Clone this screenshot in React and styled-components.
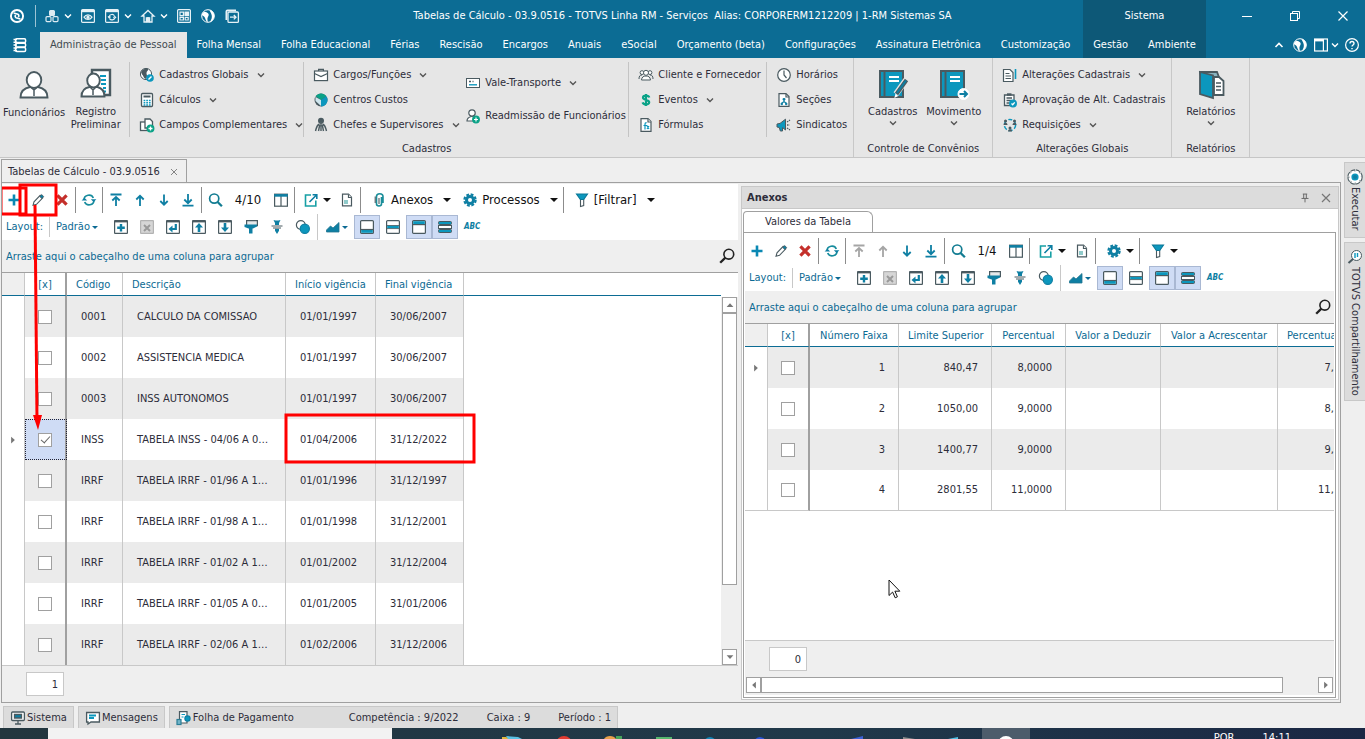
import React, { useState } from "react";
import styled, { createGlobalStyle } from "styled-components";

const INK = "#4a5a60";
const TEAL = "#0c97bd";
const BLUE = "#0e7fa3";
const GREEN = "#0aa287";

const drawings = {
  totvs: (
    <g fill="none" stroke="#fff" strokeWidth="1.7">
      <circle cx="8" cy="8" r="5.4" />
      <path d="M5 5.300l3.800 1.200c1 .5 1 1.500.4 2.300M11 10.700L7.200 9.500c-1-.5-1-1.500-.4-2.300" strokeWidth="1.500" />
    </g>
  ),
  boxes: (
    <g fill="none" stroke="#dcebf2" strokeWidth="1.2">
      <rect x="5.6" y="2.6" width="4.8" height="4.8" rx="1" fill="#dcebf2" />
      <rect x="2" y="8.6" width="5" height="5" rx="1" />
      <rect x="9" y="8.6" width="5" height="5" rx="1" />
    </g>
  ),
  windowEye: (
    <g fill="none" stroke="#e6f1f6" strokeWidth="1.2">
      <rect x="1.6" y="1.6" width="12.8" height="12.8" rx="1" />
      <path d="M2 3h12" strokeWidth="2.4" />
      <path d="M4 9.2c2-3 6-3 8 0-2 3-6 3-8 0z" />
      <circle cx="8" cy="9.2" r="1.1" fill="#e6f1f6" />
    </g>
  ),
  windowSync: (
    <g fill="none" stroke="#e6f1f6" strokeWidth="1.2">
      <rect x="1.6" y="1.6" width="12.8" height="12.8" rx="1" />
      <path d="M2 3h12" strokeWidth="2.4" />
      <path d="M5.2 8.6c.5-2.4 4-2.9 5.2-.8M10.8 9.8c-.5 2.4-4 2.9-5.2.8M4 8.4l1.2 1.4 1.4-1.2M12 10l-1.2-1.4-1.4 1.2" />
    </g>
  ),
  home: (
    <g fill="none" stroke="#e6f1f6" strokeWidth="1.3">
      <path d="M2 8l6-5.5L14 8h-2v6H9.6v-4H6.4v4H4V8z" />
      <path d="M7.4 10h1.4v4H7.4z" fill="#e6f1f6" />
    </g>
  ),
  panes: (
    <g fill="none" stroke="#e6f1f6" strokeWidth="1.2">
      <rect x="1.6" y="1.6" width="12.8" height="12.8" rx="1" />
      <path d="M4 4.2h3.4v3.4H4zM4 9.4h3.4V12H4zM9.2 9.4h3V12h-3z" />
      <path d="M9 4h3.5v3.5H9z" fill="#e6f1f6" />
    </g>
  ),
  globeWhite: (
    <g>
      <circle cx="8" cy="8" r="6.3" fill="none" stroke="#fff" strokeWidth="1" />
      <path d="M1.800 6.500C2.800 4 4.600 3 6.500 4.200c1.800 1 2.700 1.800 2 3.600-.7 1.600-1.300 2.400-1 4.200l.3 2.300C6 13.500 5.500 11 4.800 9.500 4 8 2.500 8 1.800 6.500z" fill="#fff" />
      <path d="M9.500 1.800c3.500.8 5.300 4 4.700 7.200-.5 2.500-2.200 4.500-4.700 5.200 2-2.200 2.700-4.800 2.200-7-.4-1.900-1.700-3.200-2.200-5.400z" fill="#fff" />
    </g>
  ),
  exit: (
    <g fill="none" stroke="#e6f1f6" strokeWidth="1.3">
      <rect x="4" y="4" width="10.400" height="10.400" rx="1" />
      <path d="M2.400 12V3.500c0-.8.400-1.100 1.100-1.100H12" strokeWidth="1.800" />
      <path d="M6 9.200h6M9.800 7l2.200 2.200-2.200 2.200" />
    </g>
  ),
  server: (
    <g fill="none" stroke="#fff" strokeWidth="1.5">
      <rect x="3.600" y="1.800" width="10" height="3.800" rx="1.200" />
      <rect x="3.600" y="6.200" width="10" height="3.800" rx="1.200" />
      <rect x="3.600" y="10.600" width="10" height="3.800" rx="1.200" />
      <path d="M1.500 2.500h3.500M1.500 5.200h3.500M1.500 8h3.500M1.500 11h3.500M1.500 13.600h3.500" />
    </g>
  ),
  minimize: <path d="M3 8.500h10" stroke="#fff" fill="none" />,
  restore: (
    <g fill="none" stroke="#fff">
      <rect x="3.500" y="5.500" width="7" height="7" />
      <path d="M5.500 5.500v-2h7v7h-2" />
    </g>
  ),
  close: <path d="M3.500 3.500l9 9M12.500 3.500l-9 9" stroke="#fff" strokeWidth="1.200" fill="none" />,
  closeGray: <path d="M4 4l8 8M12 4l-8 8" stroke="#777" strokeWidth="1.200" fill="none" />,
  chevronUp: <path d="M4.500 10L8 6.500 11.500 10" stroke="#fff" strokeWidth="1.600" fill="none" />,
  layoutWhite: (
    <g fill="none" stroke="#fff" strokeWidth="1.200">
      <rect x="1.600" y="2" width="12.800" height="12" />
      <path d="M1.600 3.200h8.400" strokeWidth="2.400" />
      <path d="M10.400 2v12" />
    </g>
  ),
  help: (
    <g fill="none" stroke="#fff" strokeWidth="1.200">
      <circle cx="8" cy="8" r="6.400" />
      <path d="M6 6.500c0-2.600 4-2.600 4 0C10 8 8 8 8 9.600M8 11v1.200" strokeWidth="1.400" />
    </g>
  ),
  globe: (
    <g>
      <circle cx="7" cy="7" r="5.600" fill="#fff" stroke={INK} />
      <path d="M2 5c1-3 5-4 7-3 .5 2-1.500 2-1.500 4S9 9 7 12C4 11 5 9 3 7.500z" fill={INK} />
      <circle cx="11" cy="11" r="3.800" fill={TEAL} />
      <path d="M9.500 12.500l3-3" stroke="#fff" strokeWidth="1.400" />
    </g>
  ),
  calc: (
    <g>
      <rect x="2.500" y="1.500" width="11" height="13" rx="1" fill="#fff" stroke={INK} strokeWidth="1.300" />
      <path d="M4.500 3.500h7v2h-7z" fill={INK} />
      <path d="M4.600 8.500h7M4.600 10.700h7M4.600 12.900h7" stroke={TEAL} strokeWidth="1.500" strokeDasharray="1.700 .95" />
    </g>
  ),
  fields: (
    <g fill="#fff" stroke={INK} strokeWidth="1.300">
      <rect x="1.500" y="5" width="7" height="8.500" />
      <path d="M6 2h5l2.500 2.500V11H6z" />
      <circle cx="11.500" cy="11.500" r="3.300" fill={GREEN} stroke={GREEN} />
      <path d="M11.500 9.500v4M9.500 11.500h4" stroke="#fff" />
    </g>
  ),
  briefcase: (
    <g fill="#fff" stroke={INK} strokeWidth="1.200">
      <path d="M5.600 4V2.400h4.800V4" fill="none" />
      <rect x="1.500" y="4" width="13" height="9.600" />
      <path d="M1.500 6.500l6.500 3 6.500-3" fill="none" />
    </g>
  ),
  pie: (
    <g>
      <circle cx="8" cy="8" r="6.500" fill={INK} />
      <path d="M8 8L2.800 4.300A6.300 6.300 0 0 1 13.200 4.300z" fill={GREEN} />
      <path d="M8 8l5.200-3.700A6.300 6.300 0 0 1 8 14.400z" fill={TEAL} />
      <path d="M8 8L2.500 5v4L8 14z" fill="#cfe6ee" />
    </g>
  ),
  boss: (
    <g fill="none" stroke={INK} strokeWidth="1.400">
      <circle cx="8" cy="3.800" r="2.300" fill={INK} />
      <path d="M8 6v8M6.500 7C3.500 8 3.500 11 2.500 14M9.500 7c3 1 3 4 4 7M6.700 8l-1.200 6M9.300 8l1.200 6" />
    </g>
  ),
  card: (
    <g>
      <rect x="1.500" y="3.500" width="13" height="9" fill="#fff" stroke={INK} />
      <path d="M4 6.500h2M7.500 6.500h1" stroke={INK} strokeWidth="1.400" />
      <path d="M4 9.800h8" stroke={TEAL} strokeWidth="1.400" />
    </g>
  ),
  readmit: (
    <g fill="#fff" stroke={INK} strokeWidth="1.200">
      <path d="M2 13c0-3 2-4 4.500-4.500h1L11 10v3z" />
      <circle cx="7" cy="5" r="3.200" />
      <circle cx="11" cy="11.500" r="3.300" fill={GREEN} stroke={GREEN} />
      <path d="M11 9.500v4M9 11.500h4" stroke="#fff" />
    </g>
  ),
  people: (
    <g fill="#fff" stroke={INK}>
      <circle cx="4" cy="5.600" r="1.900" />
      <circle cx="12" cy="5.600" r="1.900" />
      <path d="M1 12c0-3 1-4 3-4M15 12c0-3-1-4-3-4" fill="none" />
      <path d="M3.500 13c.3-3 2-4 4.500-4s4.200 1 4.500 4z" />
      <circle cx="8" cy="5.800" r="2.500" />
    </g>
  ),
  dollar: (
    <path d="M8 2v12M11.300 5.500C10.500 3 5 3 5 5.700c0 2.600 6.200 1.800 6.200 4.600 0 2.800-5.700 2.700-6.600 0" stroke={GREEN} strokeWidth="2.200" fill="none" />
  ),
  formula: (
    <g fill="#fff" stroke={INK} strokeWidth="1.200">
      <path d="M3 1.600h7l3 3v9.800H3z" />
      <path d="M10 2v3h3" />
      <path d="M5.500 8.500h4M7 12.500V7c0-1 .6-1.300 1.600-1.300M9 9l2 3M11 9l-2 3" stroke={TEAL} fill="none" />
    </g>
  ),
  clock: (
    <g fill="#fff" stroke={INK} strokeWidth="1.200">
      <circle cx="8" cy="8" r="6.300" />
      <path d="M8 3.500V8l2.500 3" fill="none" />
    </g>
  ),
  sections: (
    <g fill="#fff" stroke={INK} strokeWidth="1.200">
      <path d="M3 1.600h7l3 3v9.800H3z" />
      <path d="M10 2v3h3" fill="none" />
      <path d="M8 7.500v2M5.500 11.500l2.500-2 2.500 2" stroke={BLUE} fill="none" />
      <path d="M7 6.500h2v1.500H7zM5 11.200h1.500v1.500H5zM9.500 11.200H11v1.500H9.500z" fill={BLUE} stroke={BLUE} strokeWidth=".8" />
    </g>
  ),
  horn: (
    <g>
      <path d="M1 7l3-.6 5.500-4.200V13L6.500 10.500V14H4.300l-1-3.500L1 10z" fill={TEAL} stroke={INK} />
      <path d="M11 8h2.500M11 5l3-2M11 11l3 2" stroke={INK} strokeWidth="1.300" strokeDasharray="1.500 .8" />
    </g>
  ),
  docEdit: (
    <g fill="#fff" stroke={INK} strokeWidth="1.200">
      <path d="M1.500 2.500H8l3 3v9H1.500z" />
      <path d="M3.500 6.500h4M3.500 9h5.500M3.500 11.500h5.500" />
      <path d="M13.500 2v10" stroke={TEAL} strokeWidth="1.600" />
    </g>
  ),
  approve: (
    <g fill="#fff" stroke={INK} strokeWidth="1.300">
      <path d="M2.500 3h9.500v10.500H2.500z" />
      <path d="M5 2.500h4.500" strokeWidth="2.400" />
      <path d="M4.500 6h5.500M4.500 8.500h5M4.500 11h3" />
      <circle cx="11" cy="11.500" r="3.300" fill={TEAL} stroke={TEAL} />
      <path d="M9.500 11.500l1.200 1.200 2-2.400" stroke="#fff" fill="none" />
    </g>
  ),
  requests: (
    <g>
      <circle cx="8" cy="8" r="5.600" fill="none" stroke={TEAL} strokeWidth="1.500" strokeDasharray="4 2" />
      <g fill={INK}>
        <circle cx="3.500" cy="4" r="1.500" />
        <path d="M1.500 8c0-3 4-3 4 0zM10.500 8c0-3 4-3 4 0zM6 14.500c0-3 4-3 4 0z" />
        <circle cx="12.500" cy="4" r="1.500" />
        <circle cx="8" cy="11" r="1.500" />
      </g>
    </g>
  ),
  person: (
    <g fill="#fff" stroke={INK} strokeWidth="1.900">
      <path d="M2.500 28.500c0-7 4-9.500 9.500-10.500h8c5.500 1 9.500 3.500 9.500 10.500z" />
      <path d="M12 17.500l4 3.500 4-3.500M16 21v6" fill="none" strokeWidth="1.500" />
      <ellipse cx="16" cy="11" rx="7.300" ry="8" />
    </g>
  ),
  personDoc: (
    <g fill="#fff" stroke={INK} strokeWidth="1.900">
      <path d="M12 2h18v25H12z" strokeWidth="2.400" />
      <path d="M20 8h6M21 12h5M21 16h5M23 20h3M23 23.500h3" stroke={TEAL} />
      <path d="M1.500 28.500c0-6 3-8.500 8-9.500h8c4 1 7 3.500 7 9.500z" />
      <path d="M10 19l3 3 3-3M13 22v5" fill="none" strokeWidth="1.500" />
      <ellipse cx="13.500" cy="12.500" rx="6.300" ry="7" />
    </g>
  ),
  bookPen: (
    <g stroke={INK} strokeWidth="2">
      <rect x="3" y="3" width="23" height="26" fill={TEAL} />
      <path d="M7.500 3v26" />
      <path d="M12 9h10M12 13h10" stroke="#fff" />
      <path d="M29 12L19 26" fill="none" stroke="#e6e6e6" strokeWidth="6" />
      <path d="M29.500 12L19.500 26" fill="none" strokeWidth="4" />
      <path d="M29 12.500L20 25" stroke={BLUE} />
      <path d="M18.600 25.500l-1.300 4.500 4-2z" fill="#fff" stroke="none" />
    </g>
  ),
  bookArrow: (
    <g stroke={INK} strokeWidth="2">
      <rect x="3" y="3" width="23" height="26" fill={TEAL} />
      <path d="M7.500 3v26" />
      <path d="M12 9h10M12 13h10" stroke="#fff" />
      <circle cx="25.500" cy="26" r="5.500" fill="#fff" stroke="#fff" strokeWidth="1" />
      <path d="M21.500 26h7M26 23l3 3-3 3" stroke={BLUE} fill="none" />
    </g>
  ),
  reportBook: (
    <g stroke={INK} strokeWidth="1.800">
      <path d="M5 4h17l1.500 4v18H10z" fill="#8ab4c0" />
      <path d="M19 9h5l4.500 4v14H19z" fill="#fff" />
      <path d="M21 15h5M21 18.500h5M21 22h5" strokeWidth="1.300" />
      <path d="M5 4l13 3.500V30L5 26z" fill={TEAL} />
    </g>
  ),
  plus: <path d="M8 2.500v11M2.500 8h11" stroke="#0a88b3" strokeWidth="2.600" fill="none" />,
  pencil: (
    <g>
      <path d="M3 13.300l1-3.500 6.200-6.500 2.600 2.500-6.300 6.500z" fill="#fff" stroke={INK} strokeWidth="1.100" />
      <path d="M9.700 4.500l2-1.900 2 1.900-1.900 2z" fill={BLUE} stroke={INK} strokeWidth=".8" />
    </g>
  ),
  remove: <path d="M3.400 3.400l9.200 9.200M12.600 3.400l-9.200 9.200" stroke="#c4302b" strokeWidth="3.200" fill="none" />,
  refresh: (
    <g fill="none" stroke={BLUE} strokeWidth="1.700">
      <path d="M3 8c0-5.500 7.500-6.500 9.300-2M13 8c0 5.500-7.500 6.500-9.300 2" stroke="#178c9d" />
      <path d="M9.800 7.200h5.600L12.600 10zM.6 8.600h5.600L3.400 5.800z" fill={BLUE} stroke="none" />
    </g>
  ),
  first: <path d="M2.500 2.500h11M8 14V5M4.300 8.500L8 5l3.700 3.500" stroke="currentColor" strokeWidth="1.800" fill="none" />,
  up: <path d="M8 14V3.500M4.300 7.500L8 3.800l3.700 3.700" stroke="currentColor" strokeWidth="1.800" fill="none" />,
  down: <path d="M8 2.500V13M4.300 9L8 12.700 11.700 9" stroke="currentColor" strokeWidth="1.800" fill="none" />,
  last: <path d="M2.500 13.700h11M8 2v9.500M4.300 7.500L8 11.200l3.700-3.700" stroke="currentColor" strokeWidth="1.800" fill="none" />,
  search: (
    <g fill="none" stroke="#127c92">
      <circle cx="7.200" cy="6.600" r="4.600" strokeWidth="1.700" />
      <path d="M10.600 10l4.300 4.300" strokeWidth="2.300" />
    </g>
  ),
  columns: (
    <g fill="#fff" stroke={INK} strokeWidth="1.200">
      <rect x="1.600" y="2.200" width="12.800" height="12" />
      <path d="M8 2v12" />
      <path d="M1.200 3.400h13.600" stroke={BLUE} strokeWidth="2.600" />
    </g>
  ),
  exportBox: (
    <g fill="none" stroke="#17a0a5" strokeWidth="1.600">
      <path d="M8 3H2.500v11h10.300V8.500" />
      <path d="M6.500 10l6.500-6.500M9.600 2.800h4.200V7" stroke={BLUE} />
    </g>
  ),
  docGreen: (
    <g fill="#fff" stroke={INK} strokeWidth="1.200">
      <path d="M3.500 2.200h6l3 3v8.600h-9z" />
      <path d="M9.500 2.500v3h3" />
      <path d="M5 8h4v4H5z" fill="#8fcaca" stroke="none" />
    </g>
  ),
  clip: (
    <g fill="none" stroke="#1a8d99" strokeWidth="1.600">
      <path d="M10.500 5v7c0 2.600-5 2.600-5 0V4.500C5.500.8 12 .8 12 4.500V11" />
      <path d="M8 6v6M4.200 4.500V11" strokeWidth="1.100" stroke={INK} />
    </g>
  ),
  gear: (
    <g>
      <circle cx="8" cy="8" r="5" fill={BLUE} />
      <circle cx="8" cy="8" r="5.600" fill="none" stroke={BLUE} strokeWidth="2.200" strokeDasharray="2.800 1.600" />
      <circle cx="8" cy="8" r="2" fill="#fff" />
    </g>
  ),
  funnel: (
    <g stroke={INK} strokeWidth="1.100">
      <path d="M6.500 7.500h3.200v6l-3.200 1z" fill="#fff" />
      <path d="M2.500 2h11L9.700 7.500H6.400z" fill={TEAL} stroke="#0b7898" />
    </g>
  ),
  lens: (
    <g fill="none" stroke="#222">
      <circle cx="9.800" cy="6.200" r="4.900" strokeWidth="1.600" />
      <path d="M6.400 9.600L1.200 14.800" strokeWidth="2.300" />
    </g>
  ),
  addBox: (
    <g fill="#fff" stroke={INK} strokeWidth="1.200">
      <rect x="1.600" y="1.600" width="12.800" height="12.800" rx=".5" />
      <path d="M1.500 2.500h13" strokeWidth="1.800" />
      <path d="M8 5v7.500M4.200 8.700h7.600" stroke={BLUE} strokeWidth="2.400" />
    </g>
  ),
  delBox: (
    <g fill="#d6d6d6" stroke="#b3b3b3" strokeWidth="1.200">
      <rect x="1.600" y="1.600" width="12.800" height="12.800" rx=".5" />
      <path d="M5 6l6 6M11 6l-6 6" stroke="#999" strokeWidth="2" />
    </g>
  ),
  backBox: (
    <g fill="#fff" stroke={INK} strokeWidth="1.200">
      <rect x="1.600" y="1.600" width="12.800" height="12.800" rx=".5" />
      <path d="M1.500 2.500h13" strokeWidth="1.800" />
      <path d="M10.800 5v5H6" stroke={BLUE} strokeWidth="2.200" fill="none" />
      <path d="M7.500 6.500v7L3.500 10z" fill={BLUE} stroke="none" />
    </g>
  ),
  upBox: (
    <g fill="#fff" stroke={INK} strokeWidth="1.200">
      <rect x="1.600" y="1.600" width="12.800" height="12.800" rx=".5" />
      <path d="M1.500 2.500h13" strokeWidth="1.800" />
      <path d="M8 13V7" stroke={BLUE} strokeWidth="2.600" />
      <path d="M8 4l4 4.500H4z" fill={BLUE} stroke="none" />
    </g>
  ),
  downBox: (
    <g fill="#fff" stroke={INK} strokeWidth="1.200">
      <rect x="1.600" y="1.600" width="12.800" height="12.800" rx=".5" />
      <path d="M1.500 2.500h13" strokeWidth="1.800" />
      <path d="M8 4v5" stroke={BLUE} strokeWidth="2.600" />
      <path d="M8 13L4 8.500h8z" fill={BLUE} stroke="none" />
    </g>
  ),
  brush: (
    <g>
      <path d="M3.600 1.600h10.800v5H3.600z" fill="#e6e9ea" stroke={INK} strokeWidth="1.200" />
      <path d="M1.500 5.500h12.500v2L10 9.500H5.500L1.500 8z" fill={BLUE} />
      <path d="M6 9h3.500v5.500H6z" fill={BLUE} />
    </g>
  ),
  pin: (
    <g>
      <path d="M4.500 1l2 .6h3l2-.6-1.500 3v2H6V4zM6 9.800h4v2L8 15l-2-3.200z" fill={BLUE} />
      <path d="M2.500 7h11M4 9h8" stroke={INK} strokeWidth="1.100" />
    </g>
  ),
  circles: (
    <g strokeWidth="1.200">
      <circle cx="5.800" cy="6" r="4.400" fill="#fff" stroke={INK} />
      <circle cx="9.800" cy="9.800" r="4.600" fill={TEAL} stroke={BLUE} />
    </g>
  ),
  chart: <path d="M1.500 13V11l4-4 2.500 2 6-5.500V13z" fill={BLUE} stroke="#22758f" strokeWidth=".8" />,
  rowBottom: (
    <g fill="#fff" stroke={INK} strokeWidth="1.200">
      <rect x="1.600" y="1.600" width="12.800" height="12.800" rx="1" />
      <path d="M2.200 10.800h11.600v3H2.200z" fill={TEAL} stroke="none" />
      <path d="M2 10.500h12" />
    </g>
  ),
  rowMiddle: (
    <g fill="#fff" stroke={INK} strokeWidth="1.200">
      <rect x="1.600" y="1.600" width="12.800" height="12.800" rx="1" />
      <path d="M2.200 6.500h11.600v3H2.200z" fill={TEAL} stroke="none" />
      <path d="M2 6.500h12M2 9.600h12" strokeWidth=".8" />
    </g>
  ),
  rowTop: (
    <g fill="#fff" stroke={INK} strokeWidth="1.200">
      <rect x="1.600" y="1.600" width="12.800" height="12.800" rx="1" />
      <path d="M2.200 2.200h11.600v3.200H2.200z" fill={TEAL} stroke="none" />
      <path d="M2 5.600h12" />
    </g>
  ),
  rowBands: (
    <g fill={TEAL} stroke={INK}>
      <rect x="1.500" y="2.500" width="13" height="3" rx="1" />
      <rect x="1.500" y="6.500" width="13" height="3" fill="#fff" />
      <rect x="1.500" y="10.500" width="13" height="3" rx="1" />
    </g>
  ),
  pushpin: <path d="M5.500 3.500h5M6.500 3.500v5M9.500 3.500v5M4 8.500h8M8 8.500v4.500" stroke="#666" strokeWidth="1.100" fill="none" />,
  caretUp: <path d="M3.500 10.500h9L8 5.500z" fill="#777" />,
  caretDown: <path d="M3.500 5.500h9L8 10.500z" fill="#777" />,
  caretLeft: <path d="M10.500 3.500v9L5.500 8z" fill="#777" />,
  caretRight: <path d="M5.500 3.500v9L10.500 8z" fill="#777" />,
  gearWhite: (
    <g>
      <circle cx="8" cy="8" r="5.700" fill="#fff" stroke={INK} strokeWidth="4" strokeDasharray="3.800 .68" />
      <circle cx="8" cy="8" r="5.500" fill="#fff" stroke="#fff" strokeWidth="2.200" strokeDasharray="3.300 1.020" />
      <circle cx="8" cy="8" r="2.800" fill={BLUE} stroke={TEAL} strokeWidth="1.600" />
    </g>
  ),
  shareLens: (
    <g fill="#fff" stroke={INK}>
      <path d="M6 10L1.500 14" strokeWidth="2" />
      <circle cx="9.500" cy="6.500" r="5" />
      <path d="M8 4v5M10.500 4v4" stroke={TEAL} strokeWidth="1.400" />
    </g>
  ),
  monitor: (
    <g fill="#fff" stroke={INK} strokeWidth="1.300">
      <rect x="1.600" y="2" width="12.800" height="8.500" rx="1" />
      <path d="M4.500 4.500h7v3.500h-7z" fill={BLUE} />
      <path d="M8 11v2.500M5 14h6" />
    </g>
  ),
  message: (
    <g fill="#fff" stroke={INK} strokeWidth="1.300">
      <path d="M1.600 2.500h12.800v9.500H6L3 14v-2H1.600z" />
      <path d="M4 5.500h7M4 8h5" stroke={TEAL} strokeWidth="1.800" />
    </g>
  ),
  payroll: (
    <g fill="#fff" stroke={INK} strokeWidth="1.200">
      <path d="M3.500 1.600H11V13H3.500z" />
      <path d="M5.500 4.500h3.500M5.500 7h2" stroke={TEAL} />
      <circle cx="11.500" cy="8.500" r="2.600" fill={TEAL} stroke={BLUE} />
      <rect x="1" y="9.500" width="4" height="5" fill="#72b4c8" stroke="#2b7e97" />
    </g>
  ),
};

const Icon = ({ name, size = 16 }) => (
  <Glyph
    width={size}
    height={size}
    viewBox={size > 20 ? "0 0 32 32" : "0 0 16 16"}
    aria-hidden="true"
  >
    {drawings[name]}
  </Glyph>
);

const Chevron = () => (
  <Glyph width="8" height="8" viewBox="0 0 8 8" aria-hidden="true">
    <path d="M1 2.500l3 3 3-3" stroke="currentColor" strokeWidth="1.400" fill="none" />
  </Glyph>
);

const menuTabs = [
  "Administração de Pessoal",
  "Folha Mensal",
  "Folha Educacional",
  "Férias",
  "Rescisão",
  "Encargos",
  "Anuais",
  "eSocial",
  "Orçamento (beta)",
  "Configurações",
  "Assinatura Eletrônica",
  "Customização",
];

const quickActions = [
  { icon: "boxes", label: "Módulos", more: true },
  { icon: "windowEye", label: "Visualizar" },
  { icon: "windowSync", label: "Atualizar janela", more: true },
  { icon: "home", label: "Início", more: true },
  { icon: "panes", label: "Painéis" },
  { icon: "globeWhite", label: "Portal" },
  { icon: "exit", label: "Sair" },
];

const ribbonColumns = [
  {
    width: 174,
    line: true,
    items: [
      ["globe", "Cadastros Globais", true],
      ["calc", "Cálculos", true],
      ["fields", "Campos Complementares", true],
    ],
  },
  {
    width: 152,
    items: [
      ["briefcase", "Cargos/Funções", true],
      ["pie", "Centros Custos"],
      ["boss", "Chefes e Supervisores", true],
    ],
  },
  {
    width: 173,
    line: true,
    items: [
      ["card", "Vale-Transporte", true],
      ["readmit", "Readmissão de Funcionários"],
    ],
  },
  {
    width: 138,
    line: true,
    items: [
      ["people", "Cliente e Fornecedor"],
      ["dollar", "Eventos", true],
      ["formula", "Fórmulas"],
    ],
  },
  {
    width: 86,
    items: [
      ["clock", "Horários"],
      ["sections", "Seções"],
      ["horn", "Sindicatos"],
    ],
  },
];

const globalChanges = [
  ["docEdit", "Alterações Cadastrais", true],
  ["approve", "Aprovação de Alt. Cadastrais"],
  ["requests", "Requisições", true],
];

const tableRows = [
  ["0001", "CALCULO DA COMISSAO", "01/01/1997", "30/06/2007"],
  ["0002", "ASSISTENCIA MEDICA", "01/01/1997", "30/06/2007"],
  ["0003", "INSS AUTONOMOS", "01/01/1997", "30/06/2007"],
  ["INSS", "TABELA INSS - 04/06 A 03/07", "01/04/2006", "31/12/2022"],
  ["IRRF", "TABELA IRRF - 01/96 A 12/97", "01/01/1996", "31/12/1997"],
  ["IRRF", "TABELA IRRF - 01/98 A 12/01", "01/01/1998", "31/12/2001"],
  ["IRRF", "TABELA IRRF - 01/02 A 12/04", "01/01/2002", "31/12/2004"],
  ["IRRF", "TABELA IRRF - 01/05 A 01/06", "01/01/2005", "31/01/2006"],
  ["IRRF", "TABELA IRRF - 02/06 A 12/06", "01/02/2006", "31/12/2006"],
];

const rangeRows = [
  ["1", "840,47", "8,0000", "", "", "7,6500"],
  ["2", "1050,00", "9,0000", "", "", "8,6500"],
  ["3", "1400,77", "9,0000", "", "", "9,0000"],
  ["4", "2801,55", "11,0000", "", "", "11,0000"],
];

function RibbonItems({ items }) {
  return items.map(([icon, label, more]) => (
    <RibbonItem key={label} $tall={items.length === 2}>
      <Icon name={icon} />
      {label}
      {more && <Chevron />}
    </RibbonItem>
  ));
}

function ActionBar({ counter, atStart, labels }) {
  return (
    <ActionRow>
      <Tool aria-label="Incluir"><Icon name="plus" /></Tool>
      <Tool aria-label="Editar"><Icon name="pencil" /></Tool>
      <Tool aria-label="Excluir"><Icon name="remove" /></Tool>
      <Divider />
      <Tool aria-label="Atualizar"><Icon name="refresh" /></Tool>
      <Divider />
      <Tool aria-label="Primeiro" disabled={atStart}><Icon name="first" /></Tool>
      <Tool aria-label="Anterior" disabled={atStart}><Icon name="up" /></Tool>
      <Tool aria-label="Próximo"><Icon name="down" /></Tool>
      <Tool aria-label="Último"><Icon name="last" /></Tool>
      <Divider />
      <Tool aria-label="Pesquisar"><Icon name="search" /></Tool>
      <Counter $wide={labels}>{counter}</Counter>
      <Tool aria-label="Colunas"><Icon name="columns" /></Tool>
      <Divider />
      <MenuTool aria-label="Exportar"><Icon name="exportBox" /><Caret /></MenuTool>
      <Tool aria-label="Relatório"><Icon name="docGreen" /></Tool>
      <Divider />
      {labels && (
        <MenuTool $lead><Icon name="clip" /><span>Anexos</span><Caret /></MenuTool>
      )}
      <MenuTool aria-label="Processos" $lead={!labels}>
        <Icon name="gear" />
        {labels && <span>Processos</span>}
        <Caret />
      </MenuTool>
      <Divider />
      <MenuTool aria-label="Filtrar" $lead>
        <Icon name="funnel" />
        {labels && <span>[Filtrar]</span>}
        <Caret />
      </MenuTool>
    </ActionRow>
  );
}

const layoutTools = [
  ["addBox", "Novo layout"],
  ["delBox", "Excluir layout"],
  ["backBox", "Restaurar layout"],
  ["upBox", "Exportar layout"],
  ["downBox", "Importar layout"],
  ["brush", "Formatar"],
  ["pin", "Ajustar colunas"],
  ["circles", "Formatação condicional"],
];

const bandTools = [
  ["rowBottom", "Rodapé", true],
  ["rowMiddle", "Preview", false],
  ["rowTop", "Agrupamento", true],
  ["rowBands", "Linhas alternadas", true],
];

function LayoutBar() {
  return (
    <LayoutRow>
      <span>Layout:</span>
      <LayoutMenu>Padrão<Caret $small /></LayoutMenu>
      {layoutTools.map(([icon, label]) => (
        <LayoutTool key={icon} aria-label={label}><Icon name={icon} /></LayoutTool>
      ))}
      <Divider $light />
      <ChartTool aria-label="Gráfico"><Icon name="chart" /><Caret $small /></ChartTool>
      {bandTools.map(([icon, label, on]) => (
        <LayoutTool key={icon} aria-label={label} aria-pressed={on} $on={on}>
          <Icon name={icon} />
        </LayoutTool>
      ))}
      <SpellTool>ABC</SpellTool>
    </LayoutRow>
  );
}

function GroupBar() {
  return (
    <GroupArea>
      <p>Arraste aqui o cabeçalho de uma coluna para agrupar</p>
      <PlainButton aria-label="Localizar"><Icon name="lens" /></PlainButton>
    </GroupArea>
  );
}

function DataGrid({ name, widths, heads, rows, current, initial, alignRight, minWidth }) {
  const [checked, setChecked] = useState(initial);

  const toggle = (i) => {
    setChecked(checked.includes(i) ? checked.filter((n) => n !== i) : [...checked, i]);
  };

  return (
    <Grid $minWidth={minWidth} $right={alignRight}>
      <colgroup>
        {widths.map((w, i) => (
          <Col key={i} $w={w} />
        ))}
        {!alignRight && <col />}
      </colgroup>
      <thead>
        <tr>
          <th />
          <th>[x]</th>
          {heads.map((head, i) => (
            <th key={i}>{head}</th>
          ))}
          {!alignRight && <th />}
        </tr>
      </thead>
      <tbody>
        {rows.map((row, i) => (
          <tr key={i}>
            <IndicatorCell>{i === current && <Icon name="caretRight" size={12} />}</IndicatorCell>
            <CheckCell $selected={checked.includes(i)}>
              <CheckBox
                type="checkbox"
                aria-label={`${name} ${i + 1}`}
                checked={checked.includes(i)}
                onChange={() => toggle(i)}
              />
            </CheckCell>
            {row.map((value, n) => (
              <td key={n}>{value}</td>
            ))}
            {!alignRight && <RestCell />}
          </tr>
        ))}
      </tbody>
    </Grid>
  );
}

function App() {
  return (
    <Page>
      <GlobalStyle />

      <Header>
        <TitleRow>
          <QuickBar>
            <Logo><Icon name="totvs" size={18} /></Logo>
            {quickActions.map(({ icon, label, more }) => (
              <QuickButton key={icon} aria-label={label}>
                <Icon name={icon} />
                {more && <Chevron />}
              </QuickButton>
            ))}
          </QuickBar>
          <Title>
            Tabelas de Cálculo - 03.9.0516 - TOTVS Linha RM - Serviços&nbsp; Alias: CORPORERM1212209 | 1-RM Sistemas SA
          </Title>
        </TitleRow>
        <ContextTitle>Sistema</ContextTitle>
        <WindowButtons>
          <PlainButton aria-label="Minimizar"><Icon name="minimize" /></PlainButton>
          <PlainButton aria-label="Restaurar"><Icon name="restore" /></PlainButton>
          <PlainButton aria-label="Fechar"><Icon name="close" /></PlainButton>
        </WindowButtons>
        <MenuRow>
          <AppMenu aria-label="Menu"><Icon name="server" /></AppMenu>
          {menuTabs.map((tab, i) => (
            <MenuTab key={tab} $active={i === 0}>{tab}</MenuTab>
          ))}
        </MenuRow>
        <ContextTabs>
          <MenuTab>Gestão</MenuTab>
          <MenuTab>Ambiente</MenuTab>
        </ContextTabs>
        <HelpButtons>
          <PlainButton aria-label="Recolher"><Icon name="chevronUp" /></PlainButton>
          <PlainButton aria-label="Portal"><Icon name="globeWhite" /></PlainButton>
          <PlainButton aria-label="Disposição"><Icon name="layoutWhite" /><Chevron /></PlainButton>
          <PlainButton aria-label="Ajuda"><Icon name="help" /></PlainButton>
        </HelpButtons>
      </Header>

      <Ribbon>
        <RibbonGroup>
          <RibbonBody>
            <BigButtons $line>
              <BigButton><Icon name="person" size={32} />Funcionários</BigButton>
              <BigButton><Icon name="personDoc" size={32} />Registro<br />Preliminar</BigButton>
            </BigButtons>
            {ribbonColumns.map((col) => (
              <RibbonColumn key={col.width} $w={col.width} $line={col.line}>
                <RibbonItems items={col.items} />
              </RibbonColumn>
            ))}
          </RibbonBody>
          <RibbonLabel>Cadastros</RibbonLabel>
        </RibbonGroup>
        <RibbonGroup>
          <RibbonBody>
            <BigButtons $pad>
              <BigButton><Icon name="bookPen" size={32} />Cadastros<Chevron /></BigButton>
              <BigButton><Icon name="bookArrow" size={32} />Movimento<Chevron /></BigButton>
            </BigButtons>
          </RibbonBody>
          <RibbonLabel>Controle de Convênios</RibbonLabel>
        </RibbonGroup>
        <RibbonGroup>
          <RibbonBody>
            <RibbonColumn $w={178}>
              <RibbonItems items={globalChanges} />
            </RibbonColumn>
          </RibbonBody>
          <RibbonLabel>Alterações Globais</RibbonLabel>
        </RibbonGroup>
        <RibbonGroup>
          <RibbonBody>
            <BigButtons $pad>
              <BigButton><Icon name="reportBook" size={32} />Relatórios<Chevron /></BigButton>
            </BigButtons>
          </RibbonBody>
          <RibbonLabel>Relatórios</RibbonLabel>
        </RibbonGroup>
      </Ribbon>

      <Workspace>
        <Document>
          <TabStrip>
            <DocTab>
              Tabelas de Cálculo - 03.9.0516
              <PlainButton aria-label="Fechar aba"><Icon name="closeGray" size={12} /></PlainButton>
            </DocTab>
          </TabStrip>
          <DocBody>
            <MainPane>
              <ActionBar counter="4/10" labels />
              <LayoutBar />
              <GroupBar />
              <GridArea>
                <GridClip>
                  <DataGrid
                    name="Tabela"
                    widths={[23, 42, 56, 163, 90, 88]}
                    heads={["Código", "Descrição", "Início vigência", "Final vigência"]}
                    rows={tableRows}
                    current={3}
                    initial={[3]}
                  />
                </GridClip>
                <VScroll>
                  <ScrollButton aria-label="Subir"><Icon name="caretUp" size={12} /></ScrollButton>
                  <VThumb />
                  <ScrollButton aria-label="Descer"><Icon name="caretDown" size={12} /></ScrollButton>
                </VScroll>
              </GridArea>
              <Footer><Total>1</Total></Footer>
            </MainPane>

            <SidePane>
              <PaneTitle>
                Anexos
                <PaneButtons>
                  <PlainButton aria-label="Fixar"><Icon name="pushpin" size={14} /></PlainButton>
                  <PlainButton aria-label="Fechar painel"><Icon name="closeGray" /></PlainButton>
                </PaneButtons>
              </PaneTitle>
              <PaneTabs><PaneTab>Valores da Tabela</PaneTab></PaneTabs>
              <PaneBody>
                <ActionBar counter="1/4" atStart />
                <LayoutBar />
                <GroupBar />
                <GridArea>
                  <GridClip>
                    <DataGrid
                      name="Faixa"
                      widths={[23, 42, 89, 93, 74, 95, 117, 95]}
                      heads={["Número Faixa", "Limite Superior", "Percentual", "Valor a Deduzir", "Valor a Acrescentar", "Percentual"]}
                      rows={rangeRows}
                      current={0}
                      initial={[]}
                      alignRight
                      minWidth={628}
                    />
                  </GridClip>
                </GridArea>
                <Footer><Total>0</Total></Footer>
                <HScroll>
                  <ScrollButton aria-label="Esquerda"><Icon name="caretLeft" size={12} /></ScrollButton>
                  <HThumb />
                  <ScrollButton aria-label="Direita"><Icon name="caretRight" size={12} /></ScrollButton>
                </HScroll>
              </PaneBody>
              <Pointer width="14" height="20" viewBox="0 0 14 20" aria-hidden="true">
                <path d="M1 1v15.500l3.600-3.400 2.600 5.700 2.200-1-2.500-5.600h4.900z" fill="#fff" stroke="#111" />
              </Pointer>
            </SidePane>
            <Marks width="480" height="290" viewBox="0 0 480 290" aria-hidden="true">
              <g fill="none" stroke="#f00" strokeWidth="3">
                <rect x="-1" y="5" width="25" height="26" />
                <rect x="18" y="2" width="36" height="30" />
                <rect x="284" y="232" width="188" height="47" />
                <path d="M33 22l2 216" />
              </g>
              <path d="M31 232h9l-4 15z" fill="#f00" />
            </Marks>
          </DocBody>
        </Document>
        <Rail>
          <RailTab><Icon name="gearWhite" />Executar</RailTab>
          <RailTab $tall><Icon name="shareLens" />TOTVS Compartilhamento</RailTab>
        </Rail>
      </Workspace>

      <StatusBar>
        <StatusItem><Icon name="monitor" />Sistema</StatusItem>
        <StatusItem><Icon name="message" />Mensagens</StatusItem>
        <StatusItem>
          <Icon name="payroll" />
          Folha de Pagamento
          <StatusInfo>
            <span>Competência : 9/2022</span>
            <span>Caixa : 9</span>
            <span>Período : 1</span>
          </StatusInfo>
        </StatusItem>
      </StatusBar>

      <Taskbar>
        <TaskSearch />
        <TaskIcons>
          <svg width="538" height="11" viewBox="0 0 538 11" aria-hidden="true">
            <path d="M60 11V9h4l5 2z" fill="#dfb63d" />
            <path d="M64 8l12 1 4 2H66z" fill="#5ac1e4" />
            <circle cx="122" cy="16" r="8" fill="#e23b31" />
            <path d="M162 11c2-4 10-4 12 0z" fill="#e9a04a" />
            <path d="M174 8h6v3h-6z" fill="#46a35a" />
            <path d="M214 9h16v2h-16z" fill="#56b76d" />
            <circle cx="268" cy="15" r="6" fill="#1386b8" />
            <circle cx="318" cy="15" r="6" fill="#2c56d9" />
            <path d="M409 11l8-2 4-1v3z" fill="#3c61d6" />
            <path d="M461 9l12 2h-12z" fill="#8d8d8d" />
            <path d="M506 11l10-2v2z" fill="#50bfe4" />
          </svg>
        </TaskIcons>
        <TaskActive><svg width="48" height="11" viewBox="0 0 48 11" aria-hidden="true"><circle cx="24" cy="16" r="8" fill="#fff" /></svg></TaskActive>
        <Tray>
          <span>POR</span>
          <span>14:11</span>
        </Tray>
      </Taskbar>
    </Page>
  );
}

export default App;

const GlobalStyle = createGlobalStyle`
  * {
    box-sizing: border-box;
  }

  body {
    margin: 0;
    overflow: hidden;
    font-family: Tahoma, "DejaVu Sans Condensed", "Noto Sans", sans-serif;
    font-size: 11px;
    line-height: 16px;
    color: #2d2d3a;
    background: #efefef;
  }

  button {
    font: inherit;
    color: inherit;
    padding: 0;
    border: none;
    background: none;
    white-space: nowrap;
    cursor: pointer;
  }
`;

const Glyph = styled.svg`
  display: block;
  flex: none;
`;

const Page = styled.div`
  display: flex;
  flex-direction: column;
  height: 100vh;
`;

const PlainButton = styled.button`
  display: flex;
  align-items: center;
  gap: 2px;
`;

const Header = styled.header`
  display: grid;
  grid-template-columns: minmax(0, 1fr) 123px 159px;
  grid-template-rows: 32px 26px;
  flex: none;
  color: #fff;
  background: #0c6c94;
`;

const TitleRow = styled.div`
  display: flex;
  align-items: center;
`;

const QuickBar = styled.div`
  display: flex;
  align-items: center;
  gap: 8px;
  flex: 0 0 282px;
`;

const Logo = styled.div`
  display: flex;
  align-items: center;
  height: 22px;
  padding: 0 9px 0 8px;
  border-right: 1px solid #9cc3d4;
`;

const QuickButton = styled(PlainButton)`
  gap: 4px;
`;

const Title = styled.div`
  flex: 1;
  text-align: center;
  white-space: nowrap;
`;

const ContextTitle = styled.div`
  display: flex;
  align-items: center;
  justify-content: center;
  background: #0d5877;
`;

const WindowButtons = styled.div`
  display: flex;
  align-items: center;
  justify-content: flex-end;
  gap: 32px;
  padding-right: 14px;
`;

const MenuRow = styled.nav`
  display: flex;
`;

const AppMenu = styled(PlainButton)`
  flex: 0 0 40px;
  justify-content: center;
`;

const MenuTab = styled.button`
  padding: 0 10px;
  ${({ $active }) => $active && "color: #3f4a50; background: #e6e6e6;"}
`;

const ContextTabs = styled.div`
  display: flex;
  justify-content: center;
  background: #0d5877;
`;

const HelpButtons = styled.div`
  display: flex;
  justify-content: flex-end;
  gap: 5px;
  padding-right: 5px;
`;

const Ribbon = styled.div`
  display: flex;
  flex: 0 0 100px;
  background: #e6e6e6;
  border-bottom: 1px solid #c6c6c6;
`;

const RibbonGroup = styled.div`
  display: flex;
  flex-direction: column;
  border-right: 1px solid #c8c8c8;
`;

const RibbonBody = styled.div`
  display: flex;
  flex: 1;
  padding-top: 4px;
`;

const RibbonLabel = styled.div`
  height: 20px;
  padding-top: 4px;
  text-align: center;
`;

const BigButtons = styled.div`
  display: flex;
  align-items: flex-start;
  padding: 0 ${({ $pad }) => ($pad ? 8 : 3)}px;
  border-right: ${({ $line }) => ($line ? "1px solid #c4c4c4" : "none")};
`;

const BigButton = styled.button`
  display: flex;
  flex-direction: column;
  align-items: center;
  min-width: 61px;
  padding-top: 6px;
  line-height: 13px;

  svg:first-child {
    margin-bottom: 5px;
  }

  svg:last-child {
    margin-top: 1px;
    color: #555;
  }
`;

const RibbonColumn = styled.div`
  display: flex;
  flex-direction: column;
  width: ${({ $w }) => $w}px;
  padding-left: 9px;
  border-right: ${({ $line }) => ($line ? "1px solid #c4c4c4" : "none")};
`;

const RibbonItem = styled.button`
  display: flex;
  align-items: center;
  gap: 4px;
  height: ${({ $tall }) => ($tall ? 33 : 25)}px;

  &:first-child {
    margin-top: ${({ $tall }) => ($tall ? 4 : 0)}px;
  }

  svg + svg {
    margin-left: 4px;
    color: #555;
  }
`;

const Workspace = styled.div`
  display: flex;
  flex: 1;
  min-height: 0;
`;

const Document = styled.div`
  display: flex;
  flex-direction: column;
  flex: 1;
  min-width: 0;
  padding-left: 1px;
`;

const TabStrip = styled.div`
  display: flex;
  padding-top: 1px;
  height: 24px;
`;

const DocTab = styled.div`
  display: flex;
  align-items: center;
  gap: 8px;
  padding: 1px 6px 0;
  border: 1px solid #a0a0a0;
  border-bottom: none;
`;

const DocBody = styled.div`
  position: relative;
  display: flex;
  flex: 1;
  min-height: 0;
  padding-top: 1px;
  border: 1px solid #a0a0a0;
`;

const MainPane = styled.section`
  display: flex;
  flex-direction: column;
  flex: 1;
  min-width: 0;
  margin-right: 3px;
  background: #fff;
`;

const ActionRow = styled.div`
  display: flex;
  align-items: center;
  flex: 0 0 30px;
  padding-top: 2px;
  font-size: 13px;
  color: #111;
`;

const Tool = styled.button`
  display: flex;
  align-items: center;
  justify-content: center;
  width: 24px;
  height: 24px;
  color: ${BLUE};

  &:disabled {
    color: #a5a5a5;
  }
`;

const MenuTool = styled.button`
  display: flex;
  align-items: center;
  gap: 4px;
  height: 24px;
  padding: 0 4px 0 ${({ $lead }) => ($lead ? 9 : 7)}px;

  span {
    margin-right: 6px;
  }
`;

const Caret = styled.i`
  border: ${({ $small }) => ($small ? 3 : 4)}px solid transparent;
  border-top-color: currentColor;
  border-bottom: none;
`;

const Divider = styled.div`
  width: 1px;
  height: 26px;
  margin: 0 1px;
  background: ${({ $light }) => ($light ? "#c8c8c8" : "#8c8c8c")};
`;

const Counter = styled.span`
  width: ${({ $wide }) => ($wide ? 42 : 34)}px;
  text-align: center;
`;

const LayoutRow = styled.div`
  display: flex;
  align-items: center;
  flex: 0 0 26px;
  padding-left: 4px;
  color: #0c6a93;
`;

const LayoutMenu = styled.button`
  display: flex;
  align-items: center;
  gap: 2px;
  height: 20px;
  margin: 0 10px 0 6px;
  padding-left: 6px;
  border-left: 1px solid #c8c8c8;
`;

const LayoutTool = styled.button`
  display: flex;
  align-items: center;
  justify-content: center;
  width: 26px;
  height: 24px;
  border: 1px solid ${({ $on }) => ($on ? "#a9b8d3" : "transparent")};
  background: ${({ $on }) => ($on ? "#cfdcf5" : "none")};
`;

const ChartTool = styled.button`
  display: flex;
  align-items: center;
  gap: 1px;
  padding: 0 6px;
`;

const SpellTool = styled.button`
  padding-left: 6px;
  font-size: 8px;
  font-weight: bold;
  font-style: italic;
  color: ${BLUE};
`;

const GroupArea = styled.div`
  display: flex;
  align-items: center;
  justify-content: space-between;
  flex: 0 0 33px;
  padding: 0 3px 0 4px;
  color: #0c6a93;
  background: #efefef;
  border-bottom: 1px solid #a0a0a0;

  p {
    margin: 2px 0 0;
  }
`;

const GridArea = styled.div`
  display: flex;
  flex: 1;
  min-height: 0;
  background: #fff;
`;

const GridClip = styled.div`
  flex: 1;
  min-width: 0;
  overflow: hidden;
`;

const Grid = styled.table`
  width: 100%;
  min-width: ${({ $minWidth }) => ($minWidth ? `${$minWidth}px` : "0")};
  table-layout: fixed;
  border-spacing: 0;

  th {
    height: 23px;
    padding: 1px 9px 0;
    font-weight: normal;
    text-align: ${({ $right }) => ($right ? "center" : "left")};
    white-space: nowrap;
    color: #0c6a93;
    border-right: 1px solid #c8c8c8;
    border-bottom: 1px solid #0c6c94;
  }

  th:first-child {
    background: #efefef;
  }

  th:nth-child(2) {
    padding: 1px 0 0;
    text-align: center;
    border-right: 2px solid #a0a0a0;
  }

  th:last-child {
    text-align: left;
    border-right: none;
  }

  td {
    height: 41px;
    padding: 0 13px 0 14px;
    overflow: hidden;
    text-overflow: ellipsis;
    text-align: ${({ $right }) => ($right ? "right" : "left")};
    white-space: nowrap;
    border-right: 1px solid #c8c8c8;
  }

  tbody tr:nth-child(odd) td {
    background: #ebebeb;
  }

  tbody tr:last-child td {
    border-bottom: ${({ $right }) => ($right ? "1px solid #c8c8c8" : "none")};
  }
`;

const Col = styled.col`
  width: ${({ $w }) => $w}px;
`;

const IndicatorCell = styled.td`
  ${Grid} tbody tr && {
    padding: 0 0 0 5px;
    background: #fff;
  }
`;

const CheckCell = styled.td`
  ${Grid} && {
    padding: 0;
    text-align: center;
    border-right: 2px solid #a0a0a0;
    ${({ $selected }) =>
      $selected && "background: #cfdcf5; outline: 1px dotted #223; outline-offset: -1px;"}
  }
`;

const RestCell = styled.td`
  ${Grid} tbody tr && {
    background: #fff;
    border: none;
  }
`;

const CheckBox = styled.input`
  appearance: none;
  display: block;
  width: 14px;
  height: 14px;
  margin: 0 auto;
  border: 1px solid #a0a0a0;
  background: #fff;

  &:checked::after {
    content: "";
    display: block;
    width: 4px;
    height: 8px;
    margin: 0 auto;
    border: solid #666;
    border-width: 0 1px 1px 0;
    transform: rotate(42deg);
  }
`;

const VScroll = styled.div`
  display: flex;
  flex-direction: column;
  width: 17px;
  margin-top: 24px;
  padding: 0 1px;
  background: #efefef;
`;

const ScrollButton = styled.button`
  display: flex;
  align-items: center;
  justify-content: center;
  flex: none;
  width: 15px;
  height: 16px;
  border: 1px solid #a0a0a0;
  background: #fff;
`;

const VThumb = styled.div`
  flex: 0 0 74%;
  margin-bottom: auto;
  border: 1px solid #a0a0a0;
  background: #fff;
`;

const Footer = styled.div`
  flex: 0 0 37px;
  padding: 6px 24px;
  background: #efefef;
  border-top: 1px solid #c8c8c8;
`;

const Total = styled.div`
  width: 38px;
  padding: 4px 5px 2px;
  text-align: right;
  border: 1px solid #c8c8c8;
  background: #fff;
`;

const SidePane = styled.section`
  position: relative;
  display: flex;
  flex-direction: column;
  flex: 0 0 598px;
  min-width: 0;
  margin: 2px 1px 2px 0;
  border: 1px solid #c8c8c8;
  background: #fff;
`;

const PaneTitle = styled.h2`
  display: flex;
  align-items: center;
  justify-content: space-between;
  flex: 0 0 22px;
  margin: 0;
  padding: 0 4px 0 5px;
  font-size: 11px;
  background: #dcdcdc;
  border-bottom: 1px solid #c8c8c8;
`;

const PaneButtons = styled.div`
  display: flex;
  gap: 6px;
`;

const PaneTabs = styled.div`
  display: flex;
  flex: 0 0 23px;
  padding: 2px 1px 0;
`;

const PaneTab = styled.button`
  width: 130px;
  border: 1px solid #a0a0a0;
  border-bottom: none;
  border-radius: 4px 6px 0 0;
`;

const PaneBody = styled.div`
  display: flex;
  flex-direction: column;
  flex: 1;
  min-height: 0;
  margin: 0 2px 1px 1px;
  padding: 2px 1px;
  border: 1px solid #a0a0a0;
`;

const HScroll = styled.div`
  display: flex;
  justify-content: space-between;
  padding: 0 1px 2px;
  background: #efefef;
`;

const HThumb = styled.div`
  flex: 0 0 89%;
  margin-right: auto;
  border: 1px solid #a0a0a0;
  background: #fff;
`;

const Pointer = styled.svg`
  position: absolute;
  left: 146px;
  top: 392px;
`;

const Marks = styled.svg`
  position: absolute;
  left: 0;
  top: 0;
  pointer-events: none;
`;

const Rail = styled.aside`
  display: flex;
  flex-direction: column;
  gap: 4px;
  padding: 4px 0 0 3px;
`;

const RailTab = styled.button`
  display: flex;
  align-items: center;
  gap: 2px;
  width: 21px;
  height: ${({ $tall }) => ($tall ? 159 : 76)}px;
  padding-top: 6px;
  writing-mode: vertical-rl;
  background: #dcdcdc;
  border: 1px solid #c8c8c8;
  border-right: none;
`;

const StatusBar = styled.footer`
  display: flex;
  gap: 4px;
  flex: 0 0 25px;
  padding: 3px 3px 0;
`;

const StatusItem = styled.div`
  display: flex;
  align-items: center;
  gap: 1px;
  padding: 1px 6px 0;
  white-space: nowrap;
  background: #dcdcdc;
  border: 1px solid #c8c8c8;
  border-bottom: none;
`;

const StatusInfo = styled.div`
  display: flex;
  gap: 28px;
  padding-left: 54px;
`;

const Taskbar = styled.div`
  display: flex;
  flex: 0 0 11px;
  overflow: hidden;
  padding-left: 48px;
  color: #fff;
  background: linear-gradient(90deg, #22363e, #20394a 60%, #1a2744);
`;

const TaskSearch = styled.div`
  flex: 0 0 344px;
  background: #f2f2f2;
`;

const TaskIcons = styled.div`
  flex: 1;
  padding-left: 50px;
  overflow: hidden;
`;

const TaskActive = styled.div`
  width: 48px;
  background: #4d5c6b;
`;

const Tray = styled.div`
  display: flex;
  gap: 28px;
  padding: 2px 74px 0 184px;
`;
